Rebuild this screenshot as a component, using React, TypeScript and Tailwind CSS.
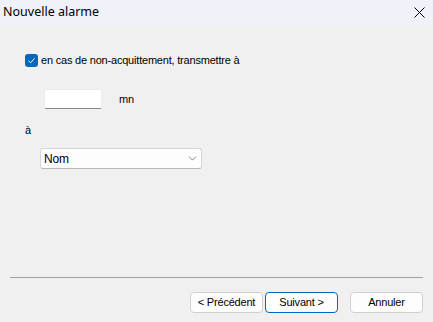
import { ChevronDown } from "lucide-react";

const ui = { fontFamily: '"Liberation Sans", Arial, sans-serif' };
const title = { fontFamily: '"Noto Sans", "Open Sans", sans-serif' };

function WinButton({ label, primary = false }: { label: string; primary?: boolean }) {
    return (
        <button
            className={`w-[73px] h-[21px] rounded-[4px] bg-[#fdfdfd] text-[11px] tracking-[-0.2px] text-black flex items-center justify-center border ${primary ? "border-[#0067c0]" : "border-[#d0d0d0]"}`}
            style={ui}
        >
            {label}
        </button>
    );
}

export default function App() {
    return (
        <div className="w-[433px] h-[322px] bg-[#f0f0f0] flex flex-col overflow-hidden">
            {/* Title bar */}
            <div className="h-[25px] bg-[#eff3f9] flex items-center justify-between pl-[3px] pr-[8px] shrink-0">
                <span className="text-[12.5px] text-black leading-none" style={title}>
                    Nouvelle alarme
                </span>
                <svg width="11" height="11" viewBox="0 0 11 11" className="text-black">
                    <path d="M0.5 0.5 L10.5 10.5 M10.5 0.5 L0.5 10.5" stroke="currentColor" strokeWidth="1" fill="none" />
                </svg>
            </div>

            {/* Content */}
            <div className="flex-1 flex flex-col pt-[29px] text-[11px] tracking-[-0.2px] text-black" style={ui}>
                <label className="flex items-center gap-[3px] pl-[25px] h-[13px]">
                    <span className="w-[13px] h-[13px] rounded-[3px] bg-[#0067c0] flex items-center justify-center">
                        <svg width="9" height="9" viewBox="0 0 9 9">
                            <path d="M1.5 4.8 L3.6 6.8 L7.6 2.3" stroke="white" strokeWidth="1" fill="none" />
                        </svg>
                    </span>
                    <span>en cas de non-acquittement, transmettre à</span>
                </label>

                <div className="flex items-center mt-[22px] pl-[44px] gap-[17px]">
                    <div className="w-[58px] h-[20px] bg-white rounded-[2px] border border-[#ececec] border-b-[#868686]" />
                    <span>mn</span>
                </div>

                <div className="mt-[15px] pl-[25px] leading-[13px]">à</div>

                <div className="mt-[11px] ml-[40px] w-[162px] h-[21px] bg-[#fdfdfd] border border-[#d6d6d6] border-b-[#b8b8b8] rounded-[3px] flex items-center justify-between pl-[3px] pr-[2px] text-[12px]">
                    <span>Nom</span>
                    <ChevronDown size={13} strokeWidth={1.2} className="text-[#444]" />
                </div>

                <div className="mt-auto mx-[10px] h-px bg-[#a0a0a0]" />

                <div className="flex justify-end items-center pr-[10px] pt-[14px] pb-[9px]">
                    <WinButton label="< Précédent" />
                    <div className="w-[2px]" />
                    <WinButton label="Suivant >" primary />
                    <div className="w-[12px]" />
                    <WinButton label="Annuler" />
                </div>
            </div>
        </div>
    );
}
